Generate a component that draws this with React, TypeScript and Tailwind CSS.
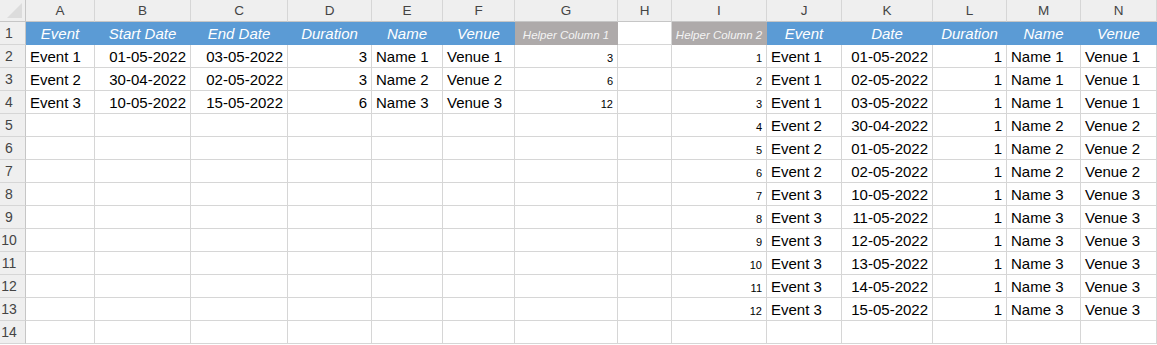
import React from "react";

const letters = ["A", "B", "C", "D", "E", "F", "G", "H", "I", "J", "K", "L", "M", "N"];

// alignment / style per column
const colKind: ("l" | "r" | "s")[] = ["l", "r", "r", "r", "l", "l", "s", "l", "s", "l", "r", "r", "l", "l"];

const headers: { text: string; fill: "blue" | "grey" | "none" }[] = [
  { text: "Event", fill: "blue" },
  { text: "Start Date", fill: "blue" },
  { text: "End Date", fill: "blue" },
  { text: "Duration", fill: "blue" },
  { text: "Name", fill: "blue" },
  { text: "Venue", fill: "blue" },
  { text: "Helper Column 1", fill: "grey" },
  { text: "", fill: "none" },
  { text: "Helper Column 2", fill: "grey" },
  { text: "Event", fill: "blue" },
  { text: "Date", fill: "blue" },
  { text: "Duration", fill: "blue" },
  { text: "Name", fill: "blue" },
  { text: "Venue", fill: "blue" },
];

const left = [
  ["Event 1", "01-05-2022", "03-05-2022", "3", "Name 1", "Venue 1", "3"],
  ["Event 2", "30-04-2022", "02-05-2022", "3", "Name 2", "Venue 2", "6"],
  ["Event 3", "10-05-2022", "15-05-2022", "6", "Name 3", "Venue 3", "12"],
];

const right = [
  ["Event 1", "01-05-2022", "Name 1", "Venue 1"],
  ["Event 1", "02-05-2022", "Name 1", "Venue 1"],
  ["Event 1", "03-05-2022", "Name 1", "Venue 1"],
  ["Event 2", "30-04-2022", "Name 2", "Venue 2"],
  ["Event 2", "01-05-2022", "Name 2", "Venue 2"],
  ["Event 2", "02-05-2022", "Name 2", "Venue 2"],
  ["Event 3", "10-05-2022", "Name 3", "Venue 3"],
  ["Event 3", "11-05-2022", "Name 3", "Venue 3"],
  ["Event 3", "12-05-2022", "Name 3", "Venue 3"],
  ["Event 3", "13-05-2022", "Name 3", "Venue 3"],
  ["Event 3", "14-05-2022", "Name 3", "Venue 3"],
  ["Event 3", "15-05-2022", "Name 3", "Venue 3"],
];

// build rows 2..14 as 14-column arrays
const body: string[][] = Array.from({ length: 13 }, (_, i) => {
  const l = left[i] ?? ["", "", "", "", "", "", ""];
  const r = right[i];
  return [
    ...l,
    "",
    r ? String(i + 1) : "",
    r ? r[0] : "",
    r ? r[1] : "",
    r ? "1" : "",
    r ? r[2] : "",
    r ? r[3] : "",
  ];
});

export default function App() {
  return (
    <div className="w-[1157px] h-[345px] bg-white font-['Liberation_Sans',Arial,sans-serif] text-black overflow-hidden">
      <div className="grid grid-cols-[26px_69px_96px_97px_84px_71px_72px_103px_54px_95px_75px_91px_74px_74px_76px]">
        {/* column letters */}
        <div className="h-[22px] bg-[#efefef] border-r border-b border-[#c6c6c6] flex items-end justify-end p-[3px]">
          <svg width="15" height="15" viewBox="0 0 15 15">
            <polygon points="15,0 15,15 0,15" fill="#dcdcdc" />
          </svg>
        </div>
        {letters.map((c) => (
          <div
            key={c}
            className="h-[22px] bg-[#efefef] border-r border-[#d6d6d6] border-b border-b-[#c6c6c6] text-center text-[13.5px] leading-[22px] text-[#444]"
          >
            {c}
          </div>
        ))}

        {/* row 1 */}
        <div className="h-[23px] bg-[#efefef] border-r border-r-[#c6c6c6] border-b border-b-[#d6d6d6] pr-[7px] text-center text-[14px] leading-[23px] text-[#444]">
          1
        </div>
        {headers.map((h, i) => {
          if (h.fill === "blue")
            return (
              <div
                key={i}
                className="h-[23px] bg-[#5b9bd5] border-r border-b border-[#5b9bd5] text-center text-[15px] italic text-white leading-[21px] pt-[1px] whitespace-nowrap"
              >
                {h.text}
              </div>
            );
          if (h.fill === "grey")
            return (
              <div
                key={i}
                className="h-[23px] bg-[#aeaaaa] border-r border-b border-[#aeaaaa] text-center text-[11.5px] italic text-[#f4f4f4] leading-[20px] pt-[3px] whitespace-nowrap"
              >
                {h.text}
              </div>
            );
          return <div key={i} className="h-[23px] bg-white border-r border-b border-[#d6d6d6]" />;
        })}

        {/* rows 2..14 */}
        {body.map((row, ri) => (
          <React.Fragment key={ri}>
            <div className="h-[23px] bg-[#efefef] border-r border-r-[#c6c6c6] border-b border-b-[#d6d6d6] pr-[7px] text-center text-[14px] leading-[23px] text-[#444]">
              {ri + 2}
            </div>
            {row.map((v, ci) => {
              const k = colKind[ci];
              if (k === "s")
                return (
                  <div
                    key={ci}
                    className="h-[23px] border-r border-b border-[#d6d6d6] text-right pr-[4px] text-[11px] leading-[20px] pt-[3px]"
                  >
                    {v}
                  </div>
                );
              return (
                <div
                  key={ci}
                  className={`h-[23px] border-r border-b border-[#d6d6d6] text-[15px] leading-[21px] pt-[1px] whitespace-nowrap overflow-hidden ${
                    k === "r" ? "text-right pr-[4px]" : "text-left pl-[4px]"
                  }`}
                >
                  {v}
                </div>
              );
            })}
          </React.Fragment>
        ))}
      </div>
    </div>
  );
}
